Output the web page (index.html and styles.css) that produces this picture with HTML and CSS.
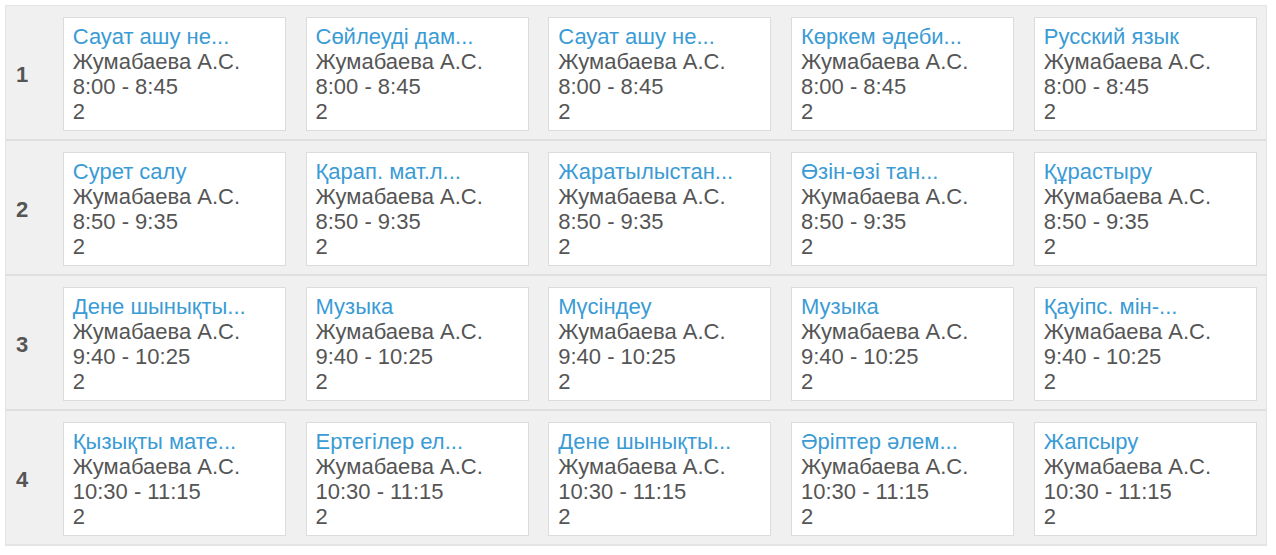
FILE: index.html
```html
<!DOCTYPE html>
<html lang="kk">
<head>
    <meta charset="UTF-8">
    <meta name="viewport" content="width=device-width, initial-scale=1.0">
    <title>Сабақ кестесі</title>
    <link rel="stylesheet" href="styles.css">
</head>
<body>
    <div class="schedule">
        <div class="lesson-row">
            <div class="lesson-num">1</div>
            <div class="lesson-card"><div class="lesson-title">Сауат ашу не...</div><div>Жумабаева А.С.</div><div>8:00 - 8:45</div><div>2</div></div>
            <div class="lesson-card"><div class="lesson-title">Сөйлеуді дам...</div><div>Жумабаева А.С.</div><div>8:00 - 8:45</div><div>2</div></div>
            <div class="lesson-card"><div class="lesson-title">Сауат ашу не...</div><div>Жумабаева А.С.</div><div>8:00 - 8:45</div><div>2</div></div>
            <div class="lesson-card"><div class="lesson-title">Көркем әдеби...</div><div>Жумабаева А.С.</div><div>8:00 - 8:45</div><div>2</div></div>
            <div class="lesson-card"><div class="lesson-title">Русский язык</div><div>Жумабаева А.С.</div><div>8:00 - 8:45</div><div>2</div></div>
        </div>
        <div class="lesson-row">
            <div class="lesson-num">2</div>
            <div class="lesson-card"><div class="lesson-title">Сурет салу</div><div>Жумабаева А.С.</div><div>8:50 - 9:35</div><div>2</div></div>
            <div class="lesson-card"><div class="lesson-title">Қарап. мат.л...</div><div>Жумабаева А.С.</div><div>8:50 - 9:35</div><div>2</div></div>
            <div class="lesson-card"><div class="lesson-title">Жаратылыстан...</div><div>Жумабаева А.С.</div><div>8:50 - 9:35</div><div>2</div></div>
            <div class="lesson-card"><div class="lesson-title">Өзін-өзі тан...</div><div>Жумабаева А.С.</div><div>8:50 - 9:35</div><div>2</div></div>
            <div class="lesson-card"><div class="lesson-title">Құрастыру</div><div>Жумабаева А.С.</div><div>8:50 - 9:35</div><div>2</div></div>
        </div>
        <div class="lesson-row">
            <div class="lesson-num">3</div>
            <div class="lesson-card"><div class="lesson-title">Дене шынықты...</div><div>Жумабаева А.С.</div><div>9:40 - 10:25</div><div>2</div></div>
            <div class="lesson-card"><div class="lesson-title">Музыка</div><div>Жумабаева А.С.</div><div>9:40 - 10:25</div><div>2</div></div>
            <div class="lesson-card"><div class="lesson-title">Мүсіндеу</div><div>Жумабаева А.С.</div><div>9:40 - 10:25</div><div>2</div></div>
            <div class="lesson-card"><div class="lesson-title">Музыка</div><div>Жумабаева А.С.</div><div>9:40 - 10:25</div><div>2</div></div>
            <div class="lesson-card"><div class="lesson-title">Қауіпс. мін-...</div><div>Жумабаева А.С.</div><div>9:40 - 10:25</div><div>2</div></div>
        </div>
        <div class="lesson-row">
            <div class="lesson-num">4</div>
            <div class="lesson-card"><div class="lesson-title">Қызықты мате...</div><div>Жумабаева А.С.</div><div>10:30 - 11:15</div><div>2</div></div>
            <div class="lesson-card"><div class="lesson-title">Ертегілер ел...</div><div>Жумабаева А.С.</div><div>10:30 - 11:15</div><div>2</div></div>
            <div class="lesson-card"><div class="lesson-title">Дене шынықты...</div><div>Жумабаева А.С.</div><div>10:30 - 11:15</div><div>2</div></div>
            <div class="lesson-card"><div class="lesson-title">Әріптер әлем...</div><div>Жумабаева А.С.</div><div>10:30 - 11:15</div><div>2</div></div>
            <div class="lesson-card"><div class="lesson-title">Жапсыру</div><div>Жумабаева А.С.</div><div>10:30 - 11:15</div><div>2</div></div>
        </div>
    </div>
</body>
</html>
```

FILE: styles.css
```css
* {
    margin: 0;
    padding: 0;
    box-sizing: border-box;
    font-family: "Liberation Sans", Arial, sans-serif;
}

body {
    background: #fff;
    color: #555;
    padding: 5px 9px 0 5px;
}

.schedule {
    border: 1px solid #e4e4e4;
    border-bottom: 2px solid #e4e4e4;
    background: #f0f0f0;
    width: 1262px;
}

.lesson-row {
    display: grid;
    grid-template-columns: 37px repeat(5, 223px);
    column-gap: 19.75px;
    align-items: center;
    padding: 11px 0 8px;
    border-bottom: 2px solid #dfdfdf;
}

.lesson-row:last-child {
    border-bottom: none;
}

.lesson-num {
    text-align: center;
    font-size: 22px;
    font-weight: bold;
    color: #555;
    padding: 2px 5px 0 0;
}

.lesson-card {
    background: #fff;
    border: 1px solid #dcdcdc;
    height: 114px;
    padding: 6px 9px 5px;
    font-size: 22px;
    line-height: 25px;
    white-space: nowrap;
    overflow: hidden;
}

.lesson-title {
    color: #3a9bd5;
}
```
